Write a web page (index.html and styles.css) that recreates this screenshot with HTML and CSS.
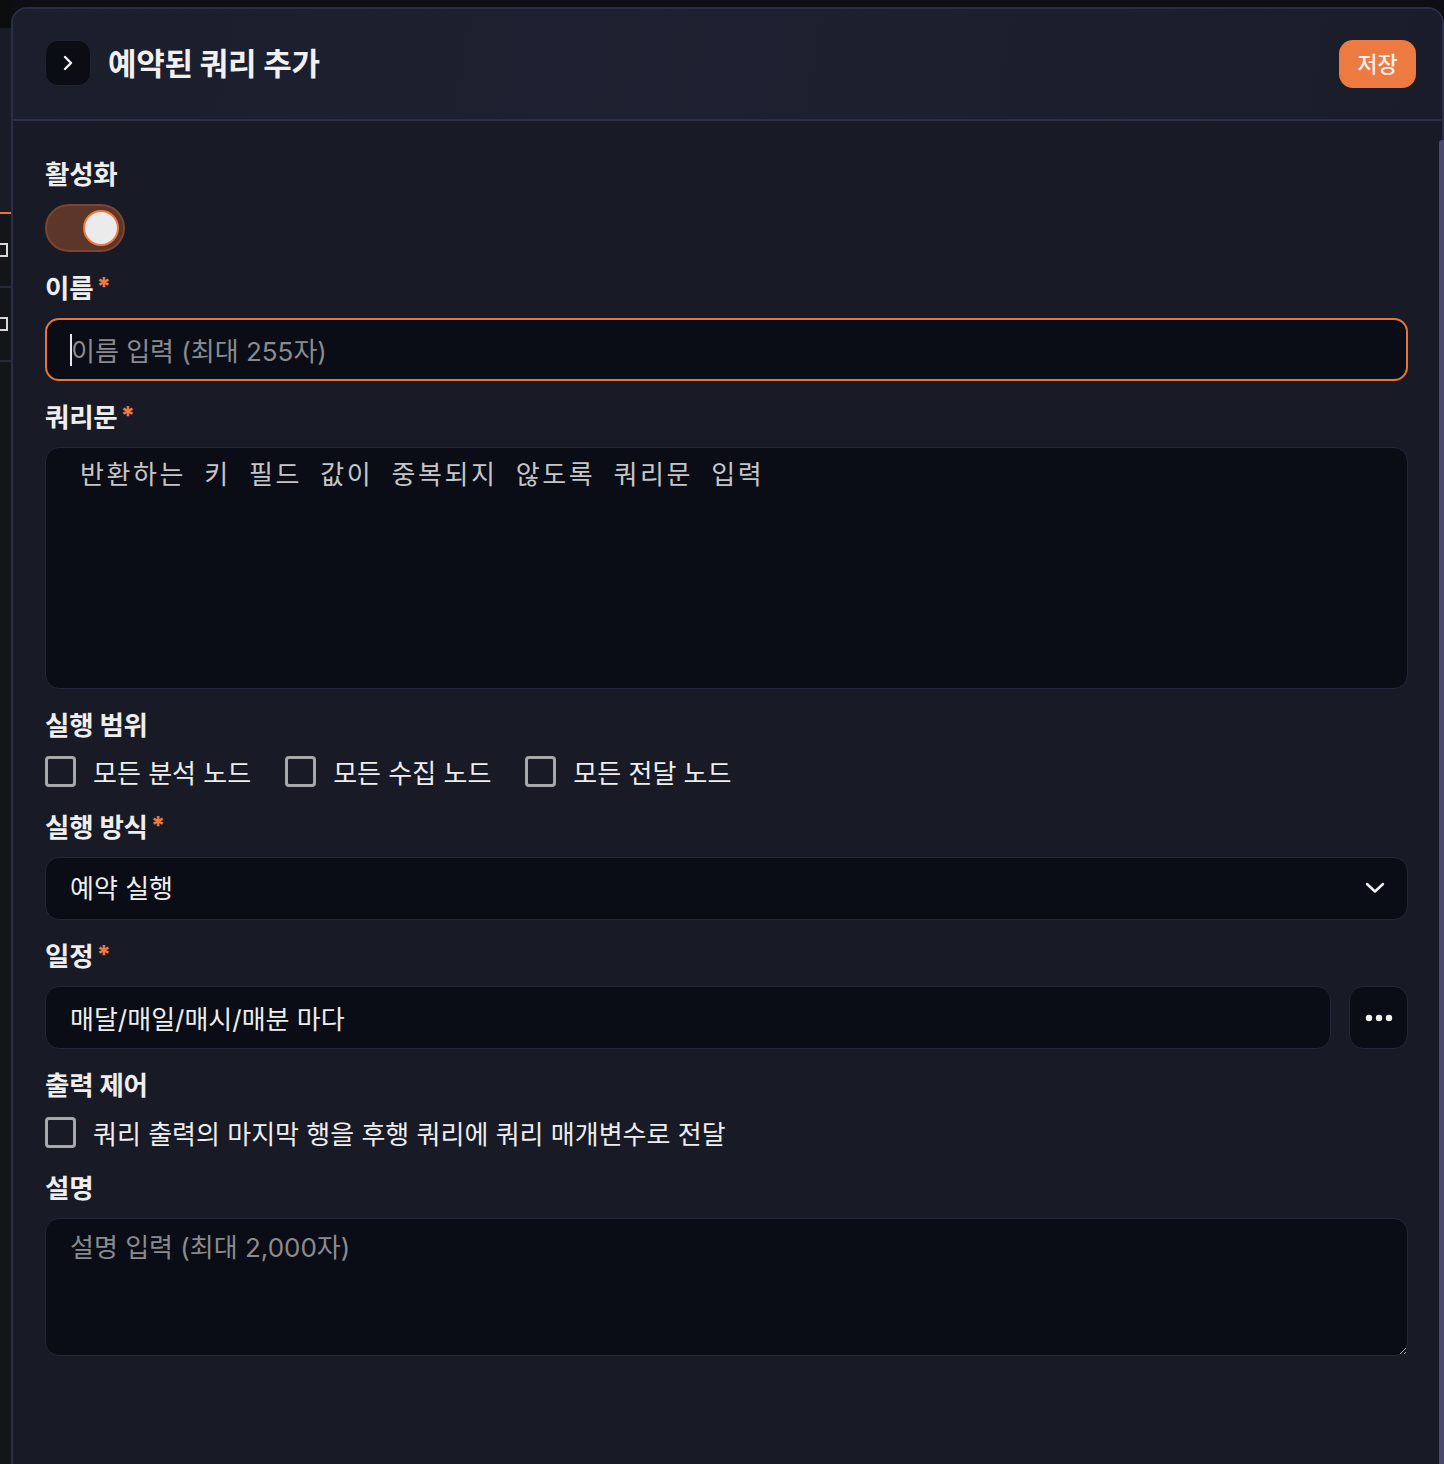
FILE: index.html
```html
<!DOCTYPE html>
<html lang="ko">
<head>
<meta charset="utf-8">
<title>예약된 쿼리 추가</title>
<link rel="stylesheet" href="styles.css">
</head>
<body>
<div class="stub">
  <div class="stub-top"></div>
  <div class="stub-a"></div>
  <div class="stub-row"><span class="stub-box"></span></div>
  <div class="stub-row"><span class="stub-box"></span></div>
  <div class="stub-rest"></div>
</div>
<div class="panel">
  <div class="scrollbar"></div>
  <header class="header">
    <button class="back" type="button" aria-label="닫기">
      <svg width="14" height="20" viewBox="0 0 14 20"><path d="M4 4 L10 10 L4 16" fill="none" stroke="#f2f2f2" stroke-width="2.4" stroke-linecap="round" stroke-linejoin="round"/></svg>
    </button>
    <h1 class="title">예약된 쿼리 추가</h1>
    <button class="save" type="button">저장</button>
  </header>
  <main class="content">
    <section class="group">
      <div class="label">활성화</div>
      <div class="toggle"><span class="knob"></span></div>
    </section>
    <section class="group">
      <div class="label">이름<span class="req">*</span></div>
      <div class="field focus"><span class="caret"></span><span class="ph">이름 입력 (최대 255자)</span></div>
    </section>
    <section class="group">
      <div class="label">쿼리문<span class="req">*</span></div>
      <div class="code"><span class="code-ph">반환하는 키 필드 값이 중복되지 않도록 쿼리문 입력</span></div>
    </section>
    <section class="group">
      <div class="label">실행 범위</div>
      <div class="checks up4">
        <label class="check"><span class="box"></span>모든 분석 노드</label>
        <label class="check"><span class="box"></span>모든 수집 노드</label>
        <label class="check"><span class="box"></span>모든 전달 노드</label>
      </div>
    </section>
    <section class="group">
      <div class="label">실행 방식<span class="req">*</span></div>
      <div class="field select">
        <span class="value">예약 실행</span>
        <svg width="20" height="12" viewBox="0 0 20 12"><path d="M2 2 L10 9.5 L18 2" fill="none" stroke="#f2f2f2" stroke-width="2.4" stroke-linecap="round" stroke-linejoin="round"/></svg>
      </div>
    </section>
    <section class="group">
      <div class="label">일정<span class="req">*</span></div>
      <div class="sched">
        <div class="field grow"><span class="value">매달/매일/매시/매분 마다</span></div>
        <button class="more" type="button" aria-label="더보기">
          <svg width="28" height="8" viewBox="0 0 28 8"><circle cx="4" cy="4" r="3.2" fill="#f2f2f2"/><circle cx="14" cy="4" r="3.2" fill="#f2f2f2"/><circle cx="24" cy="4" r="3.2" fill="#f2f2f2"/></svg>
        </button>
      </div>
    </section>
    <section class="group">
      <div class="label">출력 제어</div>
      <div class="checks up2">
        <label class="check"><span class="box"></span>쿼리 출력의 마지막 행을 후행 쿼리에 쿼리 매개변수로 전달</label>
      </div>
    </section>
    <section class="group">
      <div class="label">설명</div>
      <textarea class="desc" placeholder="설명 입력 (최대 2,000자)"></textarea>
    </section>
  </main>
</div>
</body>
</html>
```
FILE: styles.css
```css
* { box-sizing: border-box; }
html, body { margin: 0; padding: 0; }
body {
  width: 1444px;
  height: 1464px;
  overflow: hidden;
  background: #0c0e13;
  display: flex;
  font-family: Inter, "Noto Sans CJK KR", sans-serif;
  color: #eeeeef;
}
.stub {
  width: 11px;
  flex: none;
  display: flex;
  flex-direction: column;
}
.stub-top { height: 28px; background: #0b0d11; }
.stub-a { height: 186px; background: #181c26; border-bottom: 2px solid #e8743a; }
.stub-row {
  height: 74px;
  background: #12151a;
  border-bottom: 2px solid #262a3a;
  display: flex;
  align-items: center;
}
.stub-box {
  width: 8px; height: 14px;
  border: 2px solid #d8d8d8;
  border-left: none;
}
.stub-rest { flex: 1; background: #12151a; }

.panel {
  position: relative;
  flex: 1;
  margin-top: 7px;
  background: #181b26;
  border: 2px solid #2a2e48;
  border-bottom: none;
  border-radius: 16px 16px 0 0;
  display: flex;
  flex-direction: column;
}
.scrollbar {
  position: absolute;
  right: -2px;
  top: 131px;
  width: 5px;
  bottom: 0;
  background: #474a6d;
  border-radius: 3px 0 0 0;
}
.header {
  height: 112px;
  display: flex;
  align-items: center;
  padding: 0 26px 1px 32px;
  border-bottom: 2px solid #2b2f48;
  background: linear-gradient(100deg, #1b1e2b 0%, #1d2030 45%, #1a1d29 100%);
  border-radius: 14px 14px 0 0;
}
.back {
  width: 46px; height: 46px;
  border-radius: 13px;
  background: #0a0d14;
  border: 1px solid #1f2333;
  display: flex; align-items: center; justify-content: center;
  padding: 0;
  margin-top: -1px;
}
.title {
  margin: -4px 0 0 17px;
  font-size: 31px;
  font-weight: 700;
  color: #f0f0f0;
  flex: 1;
  letter-spacing: -0.3px;
}
.save {
  width: 77px; height: 48px;
  border: none;
  border-radius: 14px;
  background: #ec7a41;
  color: #f6f2ee;
  font-family: inherit;
  font-size: 22px;
  font-weight: 500;
  padding: 0 0 4px;
}
.content {
  padding: 37px 34px 0 32px;
  display: flex;
  flex-direction: column;
  gap: 20px;
}
.group { display: flex; flex-direction: column; gap: 14px; }
.label {
  height: 32px;
  line-height: 32px;
  font-size: 26.5px;
  font-weight: 700;
  color: #eeeeef;
  letter-spacing: -0.2px;
  display: flex;
  align-items: center;
}
.req {
  color: #ec7a41;
  margin-left: 3px;
  font-size: 25px;
  font-weight: 800;
  position: relative;
  top: -2px;
}
.toggle {
  width: 80px; height: 48px;
  border-radius: 24px;
  background: #5b3629;
  border: 2px solid #7b4530;
  display: flex; align-items: center; justify-content: flex-end;
  padding-right: 4px;
  margin-top: 0;
}
.knob {
  width: 36px; height: 36px;
  border-radius: 50%;
  background: #ebebec;
  border: 2px solid #ec7a41;
}
.field {
  height: 63px;
  border-radius: 14px;
  background: #0a0d15;
  border: 1px solid #22273a;
  display: flex;
  align-items: center;
  padding: 0 24px;
  font-size: 26px;
}
.field.focus { border: 2px solid #e8743a; padding-left: 23px; }
.caret { width: 2px; height: 32px; background: #e8e8e8; margin-right: -1px; }
.ph { color: #8a8b90; }
.value { color: #eeeeef; flex: 1; }
.select .value { margin-top: -4px; }
.code {
  height: 242px;
  border-radius: 14px;
  background: #0a0d15;
  border: 1px solid #22273a;
  padding: 11px 34px;
}
.code-ph {
  font-family: "Liberation Mono", "Noto Sans CJK KR", monospace;
  font-size: 26px;
  line-height: 36px;
  letter-spacing: 2.6px;
  color: #c6c6c8;
}
.checks {
  height: 40px;
  display: flex;
  align-items: center;
  gap: 34px;
}
.checks.up4 { margin-top: -4px; }
.checks.up2 { margin-top: -3px; }
.check {
  display: flex;
  align-items: center;
  gap: 17px;
  font-size: 26px;
  color: #eeeeef;
}
.box {
  width: 31px; height: 31px;
  border: 3px solid #a7a8ab;
  border-radius: 4px;
}
.select svg { margin-right: -2px; margin-top: -2px; }
.sched { display: flex; gap: 18px; }
.grow { flex: 1; }
.more {
  width: 59px; height: 63px;
  border-radius: 14px;
  background: #0a0d15;
  border: 1px solid #22273a;
  display: flex; align-items: center; justify-content: center;
  padding: 0;
}
.desc {
  height: 138px;
  border-radius: 14px;
  background: #0a0d15;
  border: 1px solid #22273a;
  padding: 11px 24px;
  font-family: inherit;
  font-size: 26px;
  line-height: 36px;
  color: #eeeeef;
  resize: vertical;
  outline: none;
}
.desc::placeholder { color: #8a8b90; }
```
